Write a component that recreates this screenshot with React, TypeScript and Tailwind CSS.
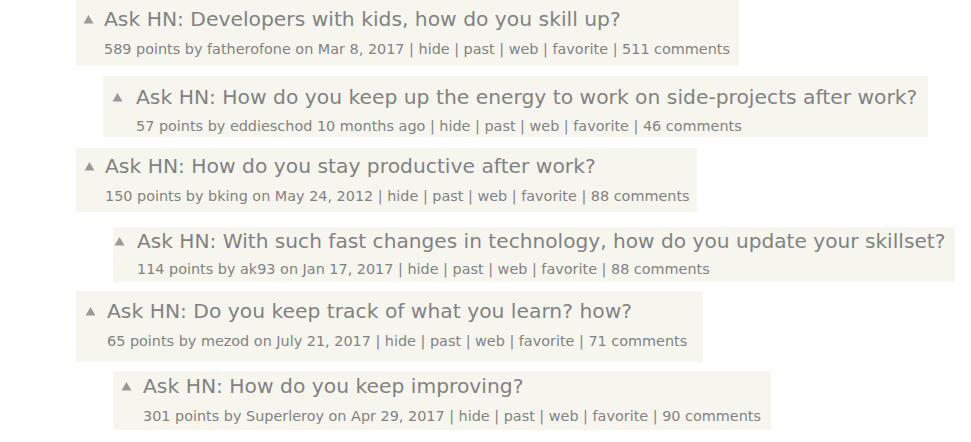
type Story = {
	title: string;
	meta: string;
	box: string;
	head: string;
	tri: string;
	titleCls: string;
	metaCls: string;
};

const stories: Story[] = [
	{
		title: "Ask HN: Developers with kids, how do you skill up?",
		meta: "589 points by fatherofone on Mar 8, 2017 | hide | past | web | favorite | 511 comments",
		box: "ml-[76px] w-[663px] h-[66px] pt-[7px]",
		head: "pl-[7px]",
		tri: "w-[21px]",
		titleCls: "text-[20.3px]",
		metaCls: "ml-[28px] mt-[9px]",
	},
	{
		title: "Ask HN: How do you keep up the energy to work on side-projects after work?",
		meta: "57 points by eddieschod 10 months ago | hide | past | web | favorite | 46 comments",
		box: "ml-[103px] mt-[10px] w-[825px] h-[61px] pt-[9px]",
		head: "pl-[9px]",
		tri: "w-[24px]",
		titleCls: "text-[20.3px]",
		metaCls: "ml-[33px] mt-[8px]",
	},
	{
		title: "Ask HN: How do you stay productive after work?",
		meta: "150 points by bking on May 24, 2012 | hide | past | web | favorite | 88 comments",
		box: "ml-[76px] mt-[11px] w-[621px] h-[64px] pt-[6px]",
		head: "pl-[8px]",
		tri: "w-[21px]",
		titleCls: "text-[20.3px]",
		metaCls: "ml-[29px] mt-[9px]",
	},
	{
		title: "Ask HN: With such fast changes in technology, how do you update your skillset?",
		meta: "114 points by ak93 on Jan 17, 2017 | hide | past | web | favorite | 88 comments",
		box: "ml-[113px] mt-[15px] w-[842px] h-[55px] pt-[2px]",
		head: "pl-[1px]",
		tri: "w-[23px]",
		titleCls: "text-[20.15px]",
		metaCls: "ml-[24px] mt-[7px]",
	},
	{
		title: "Ask HN: Do you keep track of what you learn? how?",
		meta: "65 points by mezod on July 21, 2017 | hide | past | web | favorite | 71 comments",
		box: "ml-[76px] mt-[9px] w-[627px] h-[71px] pt-[8px]",
		head: "pl-[9px]",
		tri: "w-[22px]",
		titleCls: "text-[20.3px]",
		metaCls: "ml-[31px] mt-[9px]",
	},
	{
		title: "Ask HN: How do you keep improving?",
		meta: "301 points by Superleroy on Apr 29, 2017 | hide | past | web | favorite | 90 comments",
		box: "ml-[113px] mt-[9px] w-[658px] h-[59px] pt-[3px]",
		head: "pl-[8px]",
		tri: "w-[22px]",
		titleCls: "text-[20.3px]",
		metaCls: "ml-[30px] mt-[9px]",
	},
];

function Triangle() {
	return (
		<svg width="11" height="10" viewBox="0 0 11 10" className="block">
			<path d="M5.5 1 L10.5 9.5 L0.5 9.5 Z" fill="#999999" />
		</svg>
	);
}

function StoryCard({ s }: { s: Story }) {
	return (
		<div className={`bg-[#f6f6ef] text-[#828282] ${s.box}`}>
			<div className={`flex items-center ${s.head}`}>
				<span className={`flex shrink-0 ${s.tri}`}>
					<Triangle />
				</span>
				<span className={`whitespace-nowrap leading-[24px] ${s.titleCls}`}>{s.title}</span>
			</div>
			<div className={`whitespace-nowrap text-[14.4px] leading-[18px] ${s.metaCls}`}>{s.meta}</div>
		</div>
	);
}

export default function App() {
	return (
		<div className="w-[971px] h-[442px] overflow-hidden bg-white font-['DejaVu_Sans',Verdana,sans-serif]">
			{stories.map((s) => (
				<StoryCard key={s.title} s={s} />
			))}
		</div>
	);
}
